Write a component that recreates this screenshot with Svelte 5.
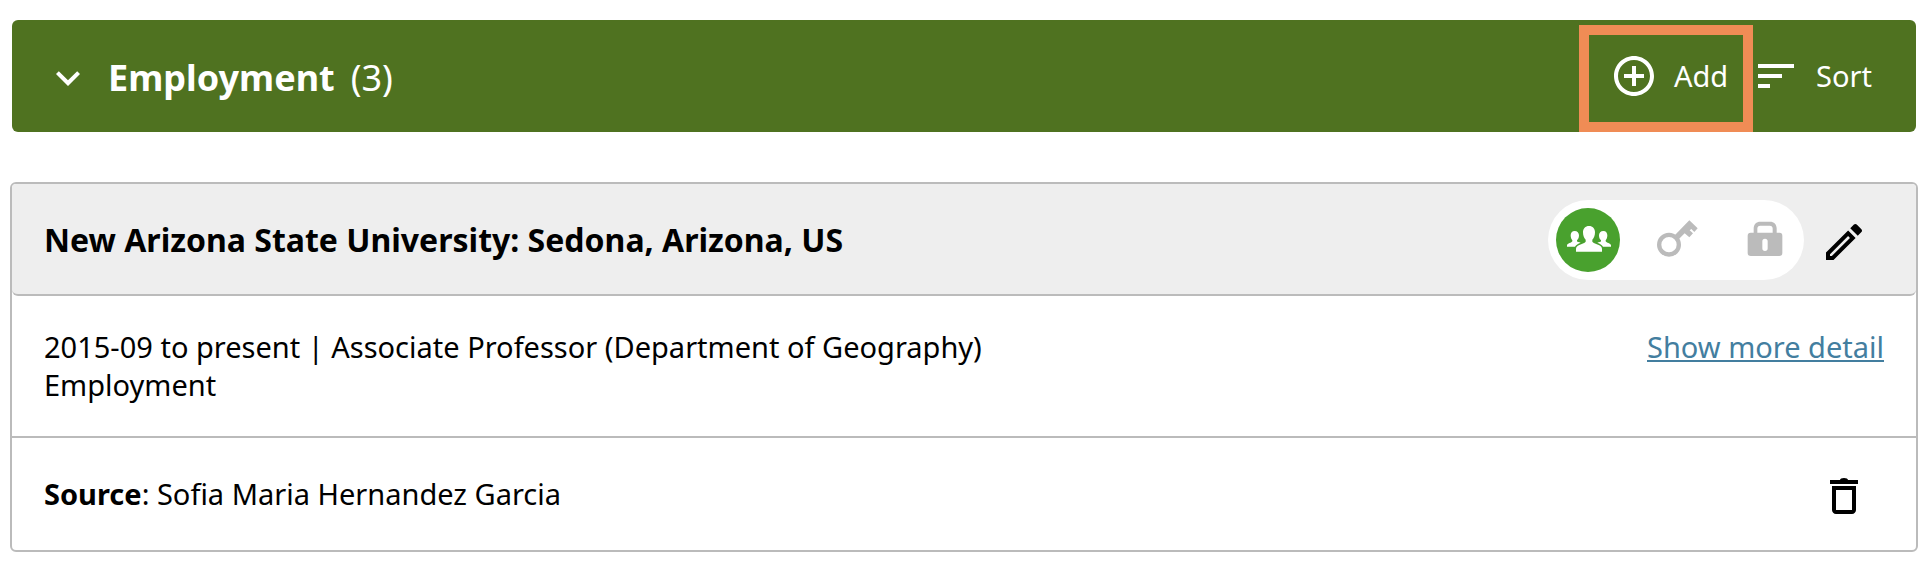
<script>
  let expanded = $state(true);
  let visibility = $state('everyone');
</script>

<main>
  <section class="bar">
    <button class="toggle" aria-label="Toggle Employment" aria-expanded={expanded} onclick={() => (expanded = !expanded)}>
      <svg class="icon" viewBox="0 0 24 24" aria-hidden="true"><path d="M16.59 8.59L12 13.17 7.41 8.59 6 10l6 6 6-6z" /></svg>
    </button>
    <h1>Employment</h1>
    <span class="count">(3)</span>
    <div class="actions">
      <button class="action highlighted">
        <svg class="icon" viewBox="0 0 24 24" aria-hidden="true"><path d="M13 7h-2v4H7v2h4v4h2v-4h4v-2h-4V7zm-1-5C6.48 2 2 6.48 2 12s4.48 10 10 10 10-4.480 10-10S17.520 2 12 2zm0 18c-4.410 0-8-3.590-8-8s3.590-8 8-8 8 3.590 8 8-3.590 8-8 8z" /></svg>
        <span>Add</span>
      </button>
      <button class="action">
        <svg class="icon" viewBox="0 0 24 24" aria-hidden="true"><path d="M3 18h6v-2H3v2zM3 6v2h18V6H3zm0 7h12v-2H3v2z" /></svg>
        <span>Sort</span>
      </button>
    </div>
  </section>

  {#if expanded}
    <article class="card">
      <header>
        <h2>New Arizona State University: Sedona, Arizona, US</h2>
        <div class="visibility" role="group" aria-label="Visibility">
          <button class:active={visibility === 'everyone'} aria-label="Everyone" aria-pressed={visibility === 'everyone'} onclick={() => (visibility = 'everyone')}>
            <svg viewBox="78 114 192 192" aria-hidden="true">
              <path d="M177 168c-11 0-18 8-18 19 0 9 3 17 8 22v6c-3 5-12 6-19 10-7 3-10 6-10 12v8h78v-8c0-6-3-9-10-12-7-4-16-5-19-10v-6c5-5 8-13 8-22 0-11-7-19-18-19z" />
              <path d="M134 183c-8 0-12 6-12 13 0 6 2 12 5 15v3c-2 5-15 5-16 12v4h24c3-6 9-9 17-12-5-2-10-1-11-4v-3c4-3 6-9 6-15 0-7-5-13-13-13z" />
              <path d="M220 183c8 0 12 6 12 13 0 6-2 12-5 15v3c2 5 15 5 16 12v4h-24c-3-6-9-9-17-12 5-2 10-1 11-4v-3c-4-3-6-9-6-15 0-7 5-13 13-13z" />
            </svg>
          </button>
          <button class:active={visibility === 'trusted'} aria-label="Trusted parties" aria-pressed={visibility === 'trusted'} onclick={() => (visibility = 'trusted')}>
            <svg viewBox="342 114 192 192" aria-hidden="true">
              <circle cx="417" cy="224" r="29.5" fill="none" stroke="currentColor" stroke-width="13" />
              <path d="M478 151L503 175L493 186L484 177L479 181L489 190L478 202L464 190L446 208L435 195Z" />
            </svg>
          </button>
          <button class:active={visibility === 'private'} aria-label="Only me" aria-pressed={visibility === 'private'} onclick={() => (visibility = 'private')}>
            <svg viewBox="606 114 192 192" aria-hidden="true">
              <path fill-rule="evenodd" d="M671 188v-13c0-12 8-20 20-20h29c12 0 20 8 20 20v13h9q8 0 8 9v52q0 9-9 9h-86q-9 0-9-9v-52q0-9 9-9zM682 188h46v-12c0-6-3-9-9-9h-28c-6 0-9 3-9 9zM705 206q-8 0-8 8v21q0 8 8 8t8-8v-21q0-8-8-8z" />
            </svg>
          </button>
        </div>
        <button class="tool" aria-label="Edit">
          <svg class="icon" viewBox="0 0 24 24" aria-hidden="true"><path d="M3 17.250V21h3.750L17.810 9.940l-3.750-3.750L3 17.250zM5.920 19H5v-.920l9.060-9.060.920.920L5.920 19zM20.710 5.630l-2.340-2.340c-.2-.2-.45-.29-.71-.29s-.51.1-.7.29l-1.830 1.830 3.750 3.750 1.830-1.830c.39-.39.39-1.020 0-1.410z" /></svg>
        </button>
      </header>

      <div class="row details">
        <div>
          <p>2015-09 to present | Associate Professor (Department of Geography)</p>
          <p>Employment</p>
        </div>
        <a href="#detail">Show more detail</a>
      </div>

      <div class="row source">
        <p><strong>Source</strong>: Sofia Maria Hernandez Garcia</p>
        <button class="tool" aria-label="Delete">
          <svg class="icon" viewBox="0 0 24 24" aria-hidden="true"><path d="M6 19c0 1.100.9 2 2 2h8c1.100 0 2-.9 2-2V7H6v12zM8 9h8v10H8V9zm6-5c0-.6-.8-1-2-1s-2 .4-2 1H5v2h14V4z" /></svg>
        </button>
      </div>
    </article>
  {/if}
</main>

<style>
  :global(body) {
    margin: 0;
    background: #fff;
  }
  main {
    padding: 20px 12px 12px 10px;
    font-family: "Noto Sans", sans-serif;
    font-size: 29px;
    line-height: 38px;
    color: #000;
  }
  h1, h2, p {
    margin: 0;
  }
  button {
    display: flex;
    align-items: center;
    padding: 0;
    border: 0;
    background: none;
    color: inherit;
    font: inherit;
    cursor: pointer;
  }
  svg {
    display: block;
    fill: currentColor;
  }
  .icon {
    width: 48px;
    height: 48px;
  }
  .bar {
    display: flex;
    align-items: center;
    min-height: 112px;
    margin: 0 2px 50px;
    padding: 4px 44px 0 32px;
    box-sizing: border-box;
    border-radius: 6px;
    background: #4f7220;
    color: #fff;
  }
  h1, .count {
    font-size: 36px;
    line-height: 48px;
  }
  h1 {
    margin: 0 16px;
    font-weight: 700;
  }
  .actions {
    display: flex;
    gap: 24px;
    margin: 0 0 4px auto;
  }
  .action {
    gap: 16px;
  }
  .highlighted {
    position: relative;
  }
  .highlighted::after {
    content: "";
    position: absolute;
    inset: -27px -25px -32px -31px;
    border: 10px solid #f08c55;
    pointer-events: none;
  }
  .card {
    border: 2px solid #bbb;
    border-radius: 6px;
  }
  header {
    display: flex;
    align-items: center;
    padding: 16px 48px 14px 32px;
    border-bottom: 2px solid #bbb;
    border-radius: 4px 4px 6px 6px;
    background: #eee;
  }
  h2 {
    flex: 1;
    font-size: 32px;
    line-height: 44px;
    font-weight: 700;
  }
  .visibility {
    display: flex;
    gap: 24px;
    margin-right: 16px;
    padding: 8px;
    border-radius: 40px;
    background: #fff;
  }
  .visibility button {
    border-radius: 50%;
    color: #bbb;
  }
  .visibility svg {
    width: 64px;
    height: 64px;
  }
  .visibility .active {
    background: #49a12e;
    color: #fff;
  }
  .tool {
    padding-top: 4px;
  }
  .row {
    display: flex;
    justify-content: space-between;
  }
  .details {
    padding: 32px 32px;
    border-bottom: 2px solid #bbb;
  }
  .source {
    align-items: center;
    padding: 30px 48px 30px 32px;
  }
  a {
    color: #437e9f;
    text-decoration: underline;
  }
</style>
